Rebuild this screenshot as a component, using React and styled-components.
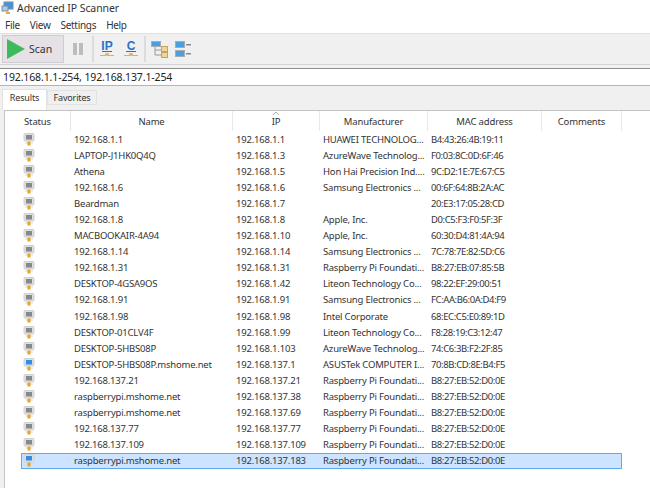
import React from "react";
import styled, { createGlobalStyle } from "styled-components";

const Global = createGlobalStyle`
  html, body {
    margin: 0;
    padding: 0;
    background: #fff;
  }
  body {
    font-family: "Noto Sans", "Open Sans", "Liberation Sans", sans-serif;
    color: #333;
  }
`;

const Window = styled.div`
  width: 650px;
  height: 488px;
  overflow: hidden;
  display: flex;
  flex-direction: column;
  background: #f0f0f0;
`;

const TitleBar = styled.div`
  height: 16px;
  display: flex;
  align-items: center;
  gap: 2px;
  padding-left: 1px;
  background: #fff;
  font-size: 10.5px;
  letter-spacing: -0.08px;
`;

const MenuBar = styled.div`
  height: 17px;
  display: flex;
  align-items: center;
  gap: 10px;
  padding-left: 5px;
  background: #fff;
  font-size: 10px;
  letter-spacing: -0.3px;
`;

const Toolbar = styled.div`
  height: 32px;
  display: flex;
  align-items: center;
  padding-left: 2px;
  background: #f0f0f0;
  border-top: 1px solid #e0e0e0;
  border-bottom: 1px solid #d4d4d4;
  box-sizing: border-box;
`;

const ScanButton = styled.div`
  width: 62px;
  height: 28px;
  box-sizing: border-box;
  display: flex;
  align-items: center;
  gap: 3px;
  padding-left: 3px;
  margin-right: 2px;
  background: #e6e1e6;
  border: 1px solid #d0ccd0;
  font-size: 10.5px;
`;

const ToolIcon = styled.div`
  width: 24px;
  height: 28px;
  display: flex;
  align-items: center;
  justify-content: center;
`;

const Divider = styled.div`
  width: 2px;
  height: 26px;
  margin: 0 1px 0 ${(p) => p.$left}px;
  background: #dcdcdc;
`;

const AddressRow = styled.div`
  height: 24px;
  display: flex;
  align-items: center;
  background: #f0f0f0;
`;

const AddressInput = styled.div`
  width: 100%;
  height: 18px;
  line-height: 17px;
  box-sizing: border-box;
  padding-left: 3px;
  background: #fff;
  border-top: 1px solid #8c8c8c;
  border-bottom: 1px solid #b4b4b4;
  font-size: 10.5px;
  letter-spacing: -0.12px;
  color: #222;
`;

const Tabs = styled.div`
  height: 21px;
  display: flex;
  align-items: flex-start;
  padding-left: 2px;
  background: #f0f0f0;
`;

const Tab = styled.div`
  height: ${(p) => (p.$active ? 21 : 15)}px;
  width: ${(p) => (p.$active ? 45 : 50)}px;
  margin-top: ${(p) => (p.$active ? 0 : 1)}px;
  padding-bottom: ${(p) => (p.$active ? 5 : 0)}px;
  display: flex;
  align-items: center;
  justify-content: center;
  box-sizing: border-box;
  background: ${(p) => (p.$active ? "#fff" : "#f0f0f0")};
  border: 1px solid #e2e2e2;
  border-bottom: ${(p) => (p.$active ? "none" : "1px solid #e2e2e2")};
  font-size: 9px;
  letter-spacing: -0.15px;
`;

const Panel = styled.div`
  flex: 1;
  margin-left: 4px;
  background: #fff;
  border-top: 1px solid #c4c4c4;
  border-left: 1px solid #c4c4c4;
`;

const HeaderRow = styled.div`
  height: 20px;
  display: grid;
  grid-template-columns: 66px 162px 87px 108px 114px 80px;
  font-size: 9.5px;
  letter-spacing: -0.15px;
`;

const HeaderCell = styled.div`
  position: relative;
  display: flex;
  align-items: center;
  justify-content: center;
  border-right: 1px solid #e8e8e8;
`;

const SortCaret = styled.svg`
  position: absolute;
  top: 0;
  left: 50%;
  margin-left: -4px;
`;

const Rows = styled.div`
  display: flex;
  flex-direction: column;
`;

const Row = styled.div`
  height: 16.1px;
  width: 601px;
  margin-left: 16px;
  box-sizing: border-box;
  display: grid;
  grid-template-columns: 50px 162px 87px 108px 114px 80px;
  align-items: center;
  font-size: 9.5px;
  background: ${(p) => (p.$selected ? "#cce4ff" : "transparent")};
  outline: ${(p) => (p.$selected ? "1px solid #62a8eb" : "none")};
  outline-offset: -1px;
`;

const IconCell = styled.div`
  display: flex;
  align-items: center;
  padding-left: 2px;
`;

const Cell = styled.div`
  padding-left: 3px;
  white-space: nowrap;
  overflow: hidden;
  letter-spacing: ${(p) => (p.$mac ? -0.4 : -0.2)}px;
`;

const PlayIcon = () => (
  <svg width="20" height="22" viewBox="0 0 20 22">
    <path d="M1 1 L19 11 L1 21 Z" fill="#3dbb5c" />
  </svg>
);

const PauseIcon = () => (
  <svg width="12" height="14" viewBox="0 0 12 14">
    <rect x="1" y="1" width="4" height="12" fill="#bcbcbc" />
    <rect x="7" y="1" width="4" height="12" fill="#bcbcbc" />
  </svg>
);

const LetterIcon = ({ letter }) => (
  <svg width="16" height="20" viewBox="0 0 16 20">
    <text
      x="8"
      y="11"
      textAnchor="middle"
      fontFamily="Liberation Sans, sans-serif"
      fontWeight="700"
      fontSize="12"
      fill="#2a73c8"
    >
      {letter}
    </text>
    <rect x="3" y="12" width="10" height="1" fill="#2a73c8" />
    <rect x="1" y="16" width="14" height="1" fill="#b4b4b4" />
    <rect x="6" y="14" width="4" height="3" rx="1" fill="#e8b85a" />
  </svg>
);

const TreeIcon = () => (
  <svg width="17" height="18" viewBox="0 0 17 18">
    <path d="M4 7 V15 H10 M4 10 H10" stroke="#999" fill="none" />
    <rect x="0.5" y="1.5" width="9" height="5" fill="#4a9fe0" stroke="#a4acb4" />
    <rect x="10.5" y="6.5" width="6" height="5" fill="#f2d496" stroke="#c9a25a" />
    <rect x="10.5" y="12.5" width="6" height="5" fill="#f2d496" stroke="#c9a25a" />
  </svg>
);

const ListIcon = () => (
  <svg width="17" height="18" viewBox="0 0 17 18">
    <rect x="0.5" y="1.5" width="9" height="6" fill="#4a9fe0" stroke="#a4acb4" />
    <rect x="0.5" y="10.5" width="9" height="6" fill="#4a9fe0" stroke="#a4acb4" />
    <rect x="11" y="4" width="5" height="1.5" fill="#8a8a8a" />
    <rect x="11" y="13" width="5" height="1.5" fill="#8a8a8a" />
  </svg>
);

const AppIcon = () => (
  <svg width="14" height="14" viewBox="0 0 14 14">
    <rect x="3" y="1" width="9" height="7" fill="#3d97e0" stroke="#7c8a99" />
    <rect x="1" y="5" width="6" height="5" fill="#a9cdee" stroke="#7c8a99" />
    <rect x="5" y="11" width="4" height="2" fill="#e8a93a" />
  </svg>
);

const HostIcon = ({ online }) => (
  <svg width="12" height="13" viewBox="0 0 12 13">
    <rect x="1" y="0.5" width="10" height="7.5" rx="1" fill="#dcdee0" stroke="#cfd1d3" />
    <rect x="3" y="2" width="6" height="4.5" fill={online ? "#2f8fe6" : "#85878b"} />
    <rect x="2" y="9.5" width="8" height="1" fill="#dadada" />
    <rect x="4.5" y="8.5" width="3" height="4" fill="#eda21f" />
  </svg>
);

const columns = ["Status", "Name", "IP", "Manufacturer", "MAC address", "Comments"];

const hosts = [
  ["192.168.1.1", "192.168.1.1", "HUAWEI TECHNOLOG...", "B4:43:26:4B:19:11"],
  ["LAPTOP-J1HK0Q4Q", "192.168.1.3", "AzureWave Technolog...", "F0:03:8C:0D:6F:46"],
  ["Athena", "192.168.1.5", "Hon Hai Precision Ind....", "9C:D2:1E:7E:67:C5"],
  ["192.168.1.6", "192.168.1.6", "Samsung Electronics ...", "00:6F:64:8B:2A:AC"],
  ["Beardman", "192.168.1.7", "", "20:E3:17:05:28:CD"],
  ["192.168.1.8", "192.168.1.8", "Apple, Inc.", "D0:C5:F3:F0:5F:3F"],
  ["MACBOOKAIR-4A94", "192.168.1.10", "Apple, Inc.", "60:30:D4:81:4A:94"],
  ["192.168.1.14", "192.168.1.14", "Samsung Electronics ...", "7C:78:7E:82:5D:C6"],
  ["192.168.1.31", "192.168.1.31", "Raspberry Pi Foundati...", "B8:27:EB:07:85:5B"],
  ["DESKTOP-4GSA9OS", "192.168.1.42", "Liteon Technology Co...", "98:22:EF:29:00:51"],
  ["192.168.1.91", "192.168.1.91", "Samsung Electronics ...", "FC:AA:B6:0A:D4:F9"],
  ["192.168.1.98", "192.168.1.98", "Intel Corporate", "68:EC:C5:E0:89:1D"],
  ["DESKTOP-01CLV4F", "192.168.1.99", "Liteon Technology Co...", "F8:28:19:C3:12:47"],
  ["DESKTOP-5HBS08P", "192.168.1.103", "AzureWave Technolog...", "74:C6:3B:F2:2F:85"],
  ["DESKTOP-5HBS08P.mshome.net", "192.168.137.1", "ASUSTek COMPUTER I...", "70:8B:CD:8E:B4:F5"],
  ["192.168.137.21", "192.168.137.21", "Raspberry Pi Foundati...", "B8:27:EB:52:D0:0E"],
  ["raspberrypi.mshome.net", "192.168.137.38", "Raspberry Pi Foundati...", "B8:27:EB:52:D0:0E"],
  ["raspberrypi.mshome.net", "192.168.137.69", "Raspberry Pi Foundati...", "B8:27:EB:52:D0:0E"],
  ["192.168.137.77", "192.168.137.77", "Raspberry Pi Foundati...", "B8:27:EB:52:D0:0E"],
  ["192.168.137.109", "192.168.137.109", "Raspberry Pi Foundati...", "B8:27:EB:52:D0:0E"],
  ["raspberrypi.mshome.net", "192.168.137.183", "Raspberry Pi Foundati...", "B8:27:EB:52:D0:0E"],
];

export default function App() {
  return (
    <Window>
      <Global />
      <TitleBar>
        <AppIcon />
        Advanced IP Scanner
      </TitleBar>
      <MenuBar>
        <span>File</span>
        <span>View</span>
        <span>Settings</span>
        <span>Help</span>
      </MenuBar>
      <Toolbar>
        <ScanButton>
          <PlayIcon />
          Scan
        </ScanButton>
        <ToolIcon>
          <PauseIcon />
        </ToolIcon>
        <Divider $left={2} />
        <ToolIcon>
          <LetterIcon letter="IP" />
        </ToolIcon>
        <ToolIcon>
          <LetterIcon letter="C" />
        </ToolIcon>
        <Divider $left={1} />
        <ToolIcon>
          <TreeIcon />
        </ToolIcon>
        <ToolIcon>
          <ListIcon />
        </ToolIcon>
      </Toolbar>
      <AddressRow>
        <AddressInput>192.168.1.1-254, 192.168.137.1-254</AddressInput>
      </AddressRow>
      <Tabs>
        <Tab $active>Results</Tab>
        <Tab>Favorites</Tab>
      </Tabs>
      <Panel>
        <HeaderRow>
          {columns.map((c) => (
            <HeaderCell key={c}>
              {c === "IP" && (
                <SortCaret width="8" height="5" viewBox="0 0 8 5">
                  <path d="M1 4 L4 1 L7 4" stroke="#b0b0b0" fill="none" />
                </SortCaret>
              )}
              {c}
            </HeaderCell>
          ))}
        </HeaderRow>
        <Rows>
          {hosts.map((h, i) => {
            const selected = i === hosts.length - 1;
            return (
              <Row key={h[1]} $selected={selected}>
                <IconCell>
                  <HostIcon online={selected || h[1] === "192.168.137.1"} />
                </IconCell>
                <Cell>{h[0]}</Cell>
                <Cell>{h[1]}</Cell>
                <Cell>{h[2]}</Cell>
                <Cell $mac>{h[3]}</Cell>
                <Cell />
              </Row>
            );
          })}
        </Rows>
      </Panel>
    </Window>
  );
}
